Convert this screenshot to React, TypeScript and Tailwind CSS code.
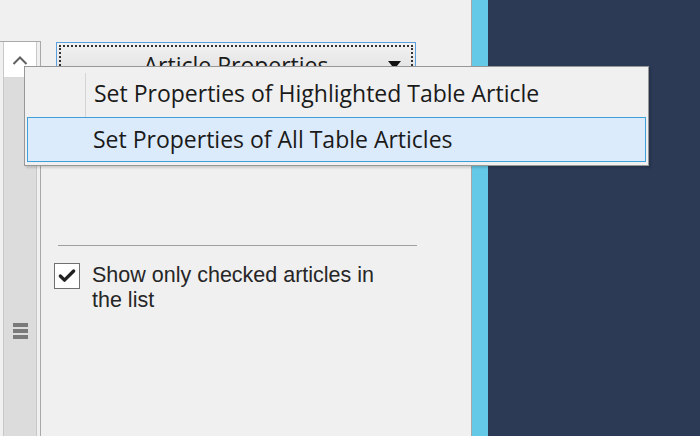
import { Check } from "lucide-react";

function ScrollStrip() {
  return (
    <div className="w-[41px] shrink-0 pt-[41px]">
      <div className="h-full border-t border-r border-[#a9a9a9] pl-[3px] pr-[3px]">
        <div className="h-full w-[34px] flex flex-col border-x border-[#c8c8c8]">
          <div className="h-[36px] bg-white border-b border-[#d9d9d9] flex items-center justify-center">
            <svg width="16" height="10" viewBox="0 0 16 10">
              <path d="M1.5 9 L8 2.5 L14.5 9" fill="none" stroke="#606060" strokeWidth="2" />
            </svg>
          </div>
          <div className="flex-1 bg-[#dcdcdc] flex flex-col items-center pt-[245px]">
            <div className="flex flex-col gap-[2px]">
              <div className="w-[15px] h-[4px] bg-[#7a7a7a]" />
              <div className="w-[15px] h-[4px] bg-[#7a7a7a]" />
              <div className="w-[15px] h-[4px] bg-[#7a7a7a]" />
            </div>
          </div>
        </div>
      </div>
    </div>
  );
}

function ContextMenu() {
  return (
    <div className="absolute left-[24px] top-[66px] w-[625px] h-[100px] bg-[#f0f0f0] border border-[#979797] shadow-[2px_2px_2px_rgba(0,0,0,0.15)] p-[2px] font-['Open_Sans',sans-serif] text-[#1a1a1a]">
      <div className="relative h-[48px] flex items-center pl-[67px]">
        <div className="absolute left-[58px] top-[4px] bottom-0 w-px bg-[#d4d4d4]" />
        <span className="text-[23px] leading-none">Set Properties of Highlighted Table Article</span>
      </div>
      <div className="h-[45px] flex items-center pl-[65px] bg-[#dcebfb] border border-[#3f9fd8]">
        <span className="text-[23px] leading-none">Set Properties of All Table Articles</span>
      </div>
    </div>
  );
}

export default function App() {
  return (
    <div className="relative w-[700px] h-[436px] overflow-hidden flex bg-[#f0f0f0]">
      <ScrollStrip />

      <div className="w-[430px] shrink-0 pl-[15px] pt-[42px]">
        <div className="w-[360px] h-[30px] border border-[#5b9fde] bg-gradient-to-b from-[#f2f2f2] to-[#e3e3e3] p-[2px]">
          <div className="h-full border-2 border-dotted border-[#333] flex items-center justify-center relative">
            <span className="font-['Open_Sans',sans-serif] text-[23px] text-[#1a1a1a] leading-none pt-[16px]">
              Article Properties
            </span>
            <svg className="absolute right-[10px] top-[14px]" width="13" height="8" viewBox="0 0 13 8">
              <path d="M0 0 H13 L6.5 8 Z" fill="#111" />
            </svg>
          </div>
        </div>

        <div className="mt-[173px] ml-[2px] w-[359px] h-px bg-[#a0a0a0]" />

        <label className="mt-[17px] -ml-[2px] flex items-start gap-[12px] font-['Liberation_Sans',sans-serif] text-[21.5px] text-[#262626] leading-[25px]">
          <span className="w-[26px] h-[26px] shrink-0 border border-[#707070] bg-white flex items-center justify-center">
            <Check size={20} strokeWidth={4} className="text-[#222]" />
          </span>
          <span className="w-[292px]">Show only checked articles in the list</span>
        </label>
      </div>

      <div className="w-px bg-[#a6a6a6]" />
      <div className="w-[16px] bg-[#64c9e7]" />
      <div className="flex-1 bg-[#2c3a56]" />

      <ContextMenu />
    </div>
  );
}
